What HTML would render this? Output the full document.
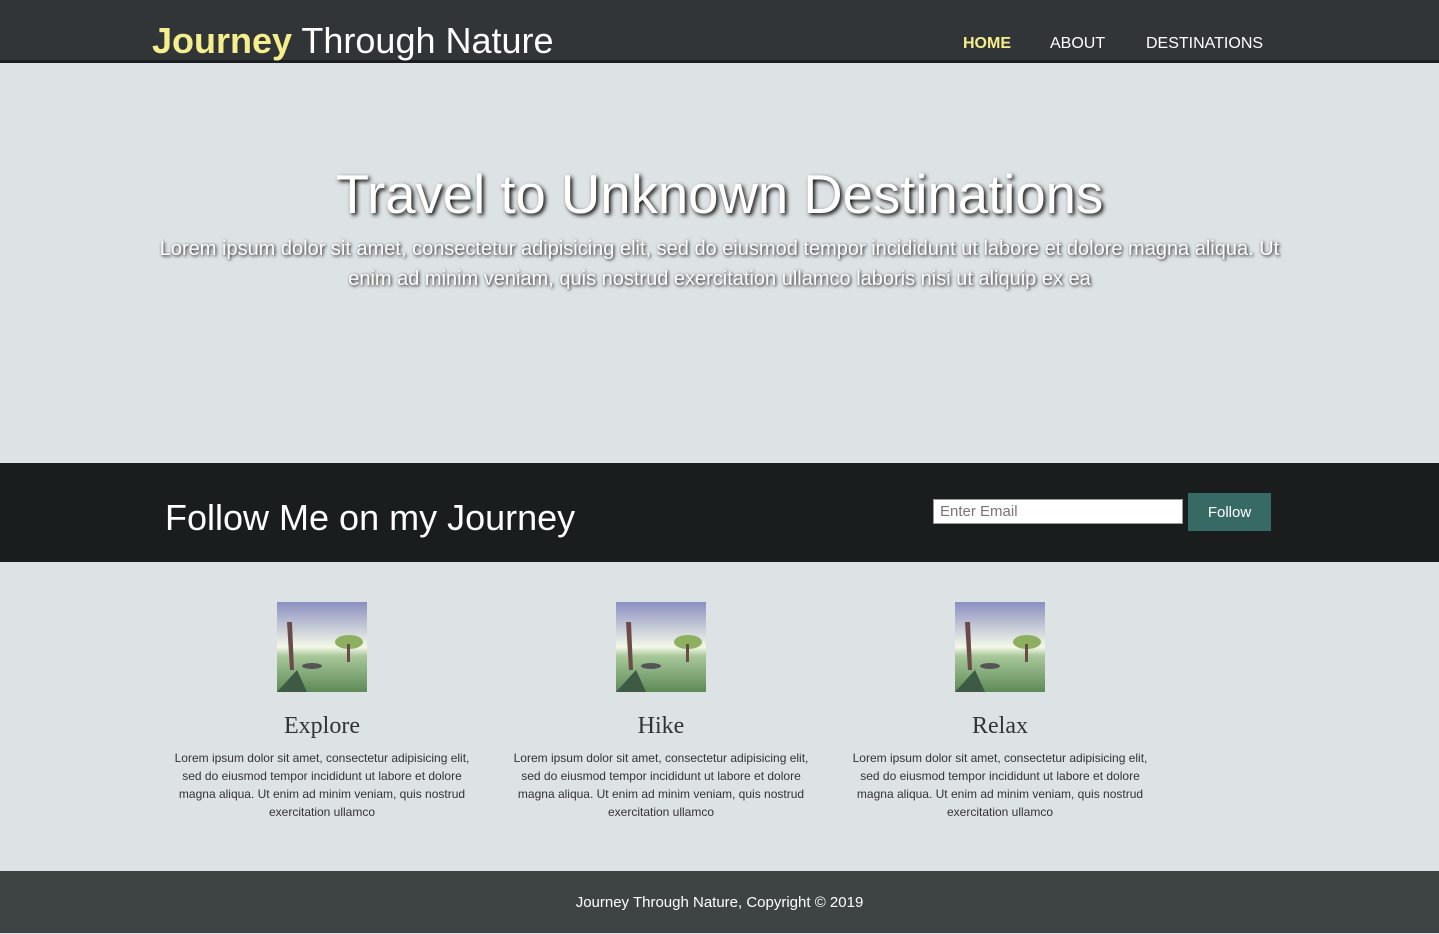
<!DOCTYPE html>
<html><head><style>
*{margin:0;padding:0;box-sizing:border-box}
body{width:1439px;height:933px;overflow:hidden;background:#dde2e4;font-family:"Liberation Sans",Arial,sans-serif}
header{position:absolute;top:0;left:0;width:1439px;height:63px;background:#313538;border-bottom:3px solid #1c1f21}
.logo{position:absolute;left:152px;top:20px;font-size:36px;color:#fff;line-height:42px}
.logo b{color:#f5ee8c}
nav{position:absolute;top:35px;left:963px;font-size:16px;color:#fff}
nav span{position:absolute;white-space:nowrap}
.hero{position:absolute;top:63px;left:0;width:1439px;height:400px;text-align:center;color:#fff}
.hero h1{position:absolute;top:100px;width:100%;font-size:54.5px;font-weight:normal;text-shadow:2px 2px 4px #000;line-height:64px}
.hero p{position:absolute;top:171px;left:150px;width:1139px;font-size:20px;line-height:30px;text-shadow:1px 1px 3px #000}
.band{position:absolute;top:463px;left:0;width:1439px;height:99px;background:#191d1e}
.band h2{position:absolute;left:165px;top:34px;font-size:36px;font-weight:normal;color:#fff}
.band input{position:absolute;left:933px;top:36px;width:250px;height:25px;border:1px solid #999;font:15px "Liberation Sans",sans-serif;padding-left:6px;color:#777}
.band button{position:absolute;left:1188px;top:30px;width:83px;height:38px;background:#376a64;border:none;color:#fff;font:15px "Liberation Sans",sans-serif}
.col{position:absolute;top:602px;width:300px;text-align:center}
.col svg{display:block;margin:0 auto}
.col h3{font-family:"Liberation Serif",serif;font-weight:normal;font-size:24px;color:#333;margin-top:20px;line-height:28px}
.col p{font-size:12px;line-height:18px;color:#333;margin-top:9px}
footer{position:absolute;top:871px;left:0;width:1439px;height:62px;background:#3e4444;color:#fff;text-align:center;font-size:15px;line-height:62px;padding-top:1px}
</style></head><body>
<header><div class="logo"><b>Journey</b> Through Nature</div>
<nav><span style="left:0;color:#f5ee8c;font-weight:bold">HOME</span><span style="left:87px">ABOUT</span><span style="left:183px">DESTINATIONS</span></nav></header>
<div class="hero"><h1>Travel to Unknown Destinations</h1>
<p>Lorem ipsum dolor sit amet, consectetur adipisicing elit, sed do eiusmod tempor incididunt ut labore et dolore magna aliqua. Ut enim ad minim veniam, quis nostrud exercitation ullamco laboris nisi ut aliquip ex ea</p></div>
<div class="band"><h2>Follow Me on my Journey</h2><input value="Enter Email"><button>Follow</button></div>
<svg width="0" height="0" style="position:absolute"><defs>
<linearGradient id="sk" x1="0" y1="0" x2="0" y2="1"><stop offset="0" stop-color="#8a8fc0"/><stop offset="0.5" stop-color="#f4f8e8"/><stop offset="0.6" stop-color="#a8c89a"/><stop offset="1" stop-color="#5e8a58"/></linearGradient></defs></svg>
<div class="col" style="left:172px"><svg width="90" height="90"><rect width="90" height="90" fill="url(#sk)"/><path d="M10 20 L13 68 L17 68 L15 20Z" fill="#6b4a4a"/><ellipse cx="72" cy="40" rx="14" ry="7" fill="#8cb060"/><rect x="70" y="42" width="3" height="18" fill="#6b4a4a"/><path d="M0 90 L20 68 L30 90Z" fill="#3e5a44"/><ellipse cx="35" cy="64" rx="10" ry="3" fill="#555"/></svg><h3>Explore</h3><p>Lorem ipsum dolor sit amet, consectetur adipisicing elit, sed do eiusmod tempor incididunt ut labore et dolore magna aliqua. Ut enim ad minim veniam, quis nostrud exercitation ullamco</p></div>
<div class="col" style="left:511px"><svg width="90" height="90"><rect width="90" height="90" fill="url(#sk)"/><path d="M10 20 L13 68 L17 68 L15 20Z" fill="#6b4a4a"/><ellipse cx="72" cy="40" rx="14" ry="7" fill="#8cb060"/><rect x="70" y="42" width="3" height="18" fill="#6b4a4a"/><path d="M0 90 L20 68 L30 90Z" fill="#3e5a44"/><ellipse cx="35" cy="64" rx="10" ry="3" fill="#555"/></svg><h3>Hike</h3><p>Lorem ipsum dolor sit amet, consectetur adipisicing elit, sed do eiusmod tempor incididunt ut labore et dolore magna aliqua. Ut enim ad minim veniam, quis nostrud exercitation ullamco</p></div>
<div class="col" style="left:850px"><svg width="90" height="90"><rect width="90" height="90" fill="url(#sk)"/><path d="M10 20 L13 68 L17 68 L15 20Z" fill="#6b4a4a"/><ellipse cx="72" cy="40" rx="14" ry="7" fill="#8cb060"/><rect x="70" y="42" width="3" height="18" fill="#6b4a4a"/><path d="M0 90 L20 68 L30 90Z" fill="#3e5a44"/><ellipse cx="35" cy="64" rx="10" ry="3" fill="#555"/></svg><h3>Relax</h3><p>Lorem ipsum dolor sit amet, consectetur adipisicing elit, sed do eiusmod tempor incididunt ut labore et dolore magna aliqua. Ut enim ad minim veniam, quis nostrud exercitation ullamco</p></div>
<footer>Journey Through Nature, Copyright © 2019</footer>
</body></html>
